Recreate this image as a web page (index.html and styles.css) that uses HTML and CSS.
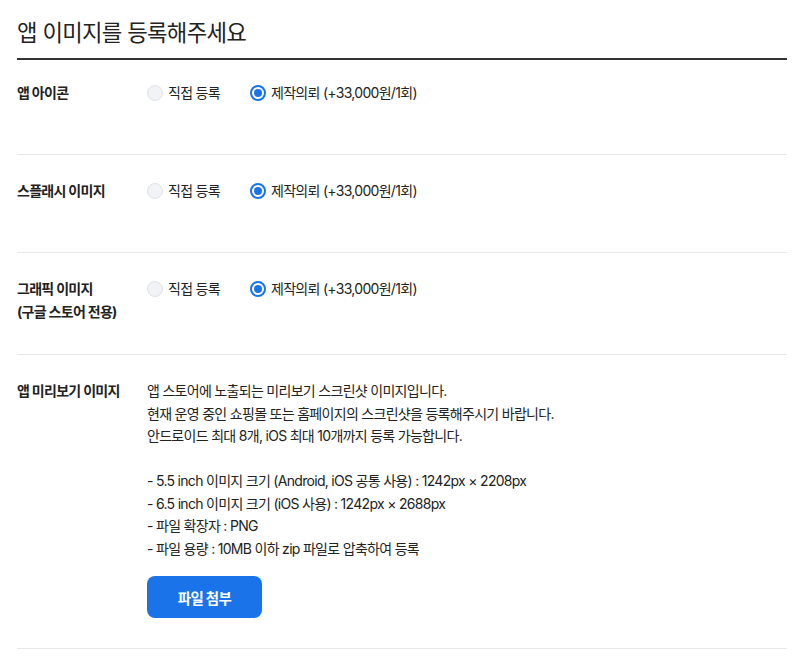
FILE: index.html
```html
<!DOCTYPE html>
<html lang="ko">
<head>
<meta charset="utf-8">
<title>앱 이미지 등록</title>
<link rel="stylesheet" href="styles.css">
</head>
<body>
<main class="page">
  <h1 class="title">앱 이미지를 등록해주세요</h1>

  <section class="row row-first">
    <div class="label">앱 아이콘</div>
    <div class="field">
      <div class="options">
        <label class="option"><span class="radio"></span><span>직접 등록</span></label>
        <label class="option"><span class="radio checked"></span><span>제작의뢰 (+33,000원/1회)</span></label>
      </div>
    </div>
  </section>

  <section class="row">
    <div class="label">스플래시 이미지</div>
    <div class="field">
      <div class="options">
        <label class="option"><span class="radio"></span><span>직접 등록</span></label>
        <label class="option"><span class="radio checked"></span><span>제작의뢰 (+33,000원/1회)</span></label>
      </div>
    </div>
  </section>

  <section class="row">
    <div class="label">그래픽 이미지<br>(구글 스토어 전용)</div>
    <div class="field">
      <div class="options">
        <label class="option"><span class="radio"></span><span>직접 등록</span></label>
        <label class="option"><span class="radio checked"></span><span>제작의뢰 (+33,000원/1회)</span></label>
      </div>
    </div>
  </section>

  <section class="row row-last">
    <div class="label">앱 미리보기 이미지</div>
    <div class="field">
      <p class="desc">앱 스토어에 노출되는 미리보기 스크린샷 이미지입니다.<br>현재 운영 중인 쇼핑몰 또는 홈페이지의 스크린샷을 등록해주시기 바랍니다.<br>안드로이드 최대 8개, iOS 최대 10개까지 등록 가능합니다.</p>
      <ul class="specs">
        <li>- 5.5 inch 이미지 크기 (Android, iOS 공통 사용) : 1242px × 2208px</li>
        <li>- 6.5 inch 이미지 크기 (iOS 사용) : 1242px × 2688px</li>
        <li>- 파일 확장자 : PNG</li>
        <li>- 파일 용량 : 10MB 이하 zip 파일로 압축하여 등록</li>
      </ul>
      <button class="btn" type="button">파일 첨부</button>
    </div>
  </section>
</main>
</body>
</html>
```

FILE: styles.css
```css
* { box-sizing: border-box; }
html, body { margin: 0; padding: 0; background: #fff; }
body {
  font-family: Inter, "Noto Sans CJK KR", sans-serif;
  font-size: 14px;
  color: #222;
  letter-spacing: -0.7px;
}
.page {
  width: 770px;
  margin-left: 17px;
}
.title {
  margin: 0;
  padding-top: 17px;
  height: 60px;
  font-size: 22.3px;
  font-weight: 400;
  line-height: 32px;
  border-bottom: 2px solid #333;
}
.row {
  display: grid;
  grid-template-columns: 130px 1fr;
  padding: 25px 0 31px;
  min-height: 98px;
  border-bottom: 1px solid #e8e8e8;
  line-height: 22.5px;
}
.row-first {
  padding-top: 22px;
  min-height: 95px;
}
.row-last {
  padding-bottom: 30px;
}
.label {
  font-weight: 700;
}
.options {
  display: flex;
  gap: 30px;
}
.option {
  display: flex;
  align-items: center;
  gap: 5px;
}
.radio {
  width: 16px;
  height: 16px;
  border-radius: 50%;
  background: #f1f3f6;
  border: 1px solid #dfe3e8;
}
.radio.checked {
  background: #fff;
  border: 2px solid #1a73e8;
  position: relative;
}
.radio.checked::after {
  content: "";
  position: absolute;
  left: 2px;
  top: 2px;
  width: 8px;
  height: 8px;
  border-radius: 50%;
  background: #1a73e8;
}
.desc {
  margin: 0;
}
.specs {
  list-style: none;
  margin: 22.5px 0 0;
  padding: 0;
}
.btn {
  margin-top: 16px;
  width: 115px;
  height: 42px;
  border: 0;
  border-radius: 8px;
  background: #1a73e8;
  color: #fff;
  font-family: inherit;
  font-size: 14.5px;
  font-weight: 700;
  letter-spacing: inherit;
}
```
